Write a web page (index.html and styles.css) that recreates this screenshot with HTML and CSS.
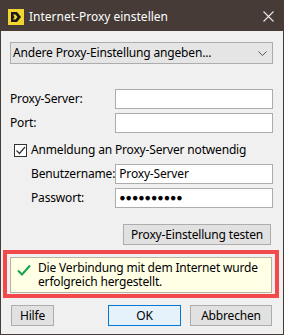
FILE: index.html
```html
<!DOCTYPE html>
<html lang="de">
<head>
  <meta charset="UTF-8" />
  <title>Internet-Proxy einstellen</title>
  <link rel="stylesheet" href="styles.css">
</head>
<body>
  <div class="window">
    <div class="titlebar">
      <svg class="app-icon" width="16" height="16" viewBox="0 0 16 16">
        <rect width="16" height="16" fill="#f2d530"/>
        <path d="M3 3h6l4 5-4 5H3l2-2.5h2.5L9.5 8 7.5 5.5H5L6.5 8 5 10.5 3 13V3z" fill="#1a1a1a"/>
      </svg>
      <span class="title">Internet-Proxy einstellen</span>
      <svg class="close" width="11" height="11" viewBox="0 0 11 11">
        <path d="M0.5 0.5l10 10M10.5 0.5l-10 10" stroke="#e8e8e8" stroke-width="1.1"/>
      </svg>
    </div>
    <div class="content">
      <div class="select">
        <span>Andere Proxy-Einstellung angeben...</span>
        <svg width="9" height="5" viewBox="0 0 9 5"><path d="M0.5 0.5l4 4 4-4" fill="none" stroke="#555" stroke-width="1"/></svg>
      </div>

      <div class="grid server">
        <label>Proxy-Server:</label>
        <div class="input"></div>
        <label>Port:</label>
        <div class="input"></div>
      </div>

      <div class="check-row">
        <span class="checkbox">
          <svg width="11" height="11" viewBox="0 0 11 11"><path d="M1.5 5.5l3 3 5.5-6.5" fill="none" stroke="#333" stroke-width="1.2"/></svg>
        </span>
        <span>Anmeldung an Proxy-Server notwendig</span>
      </div>

      <div class="grid login">
        <label>Benutzername:</label>
        <div class="input">Proxy-Server</div>
        <label>Passwort:</label>
        <div class="input dots">●●●●●●●●●●</div>
      </div>

      <div class="test-row">
        <button class="btn test">Proxy-Einstellung testen</button>
      </div>

      <div class="highlight">
        <div class="message">
          <svg class="ok-icon" width="14" height="12" viewBox="0 0 14 12"><path d="M1 6.5l4 4L13 1.5" fill="none" stroke="#16a34a" stroke-width="2"/></svg>
          <p>Die Verbindung mit dem Internet wurde erfolgreich hergestellt.</p>
        </div>
      </div>

      <div class="buttons">
        <button class="btn help">Hilfe</button>
        <button class="btn ok">OK</button>
        <button class="btn cancel">Abbrechen</button>
      </div>
    </div>
  </div>
</body>
</html>
```

FILE: styles.css
```css
body {
  margin: 0;
  padding: 0;
  font-family: 'Segoe UI', 'Noto Sans', sans-serif;
  font-size: 12px;
  line-height: 16px;
  letter-spacing: -0.17px;
  color: #000;
}
.window {
  width: 284px;
  height: 335px;
  background: #f0f0f0;
  display: flex;
  flex-direction: column;
}
.titlebar {
  height: 31px;
  background: #463b36;
  display: flex;
  align-items: center;
  padding: 3px 10px 0 8px;
  box-sizing: border-box;
  color: #fff;
}
.app-icon {
  flex: none;
}
.title {
  margin-left: 5px;
  flex: 1;
  font-size: 12px;
  letter-spacing: 0;
}
.close {
  margin-top: -1px;
}
.content {
  flex: 1;
  border: 1px solid #463b36;
  border-top: none;
  padding: 11px 10px 0 9px;
}
.select {
  height: 22px;
  box-sizing: border-box;
  border: 1px solid #adadad;
  background: #e5e5e5;
  display: flex;
  align-items: center;
  justify-content: space-between;
  padding: 0 5px 0 2px;
}
.grid {
  display: grid;
  grid-template-columns: 1fr 158px;
  row-gap: 4px;
  align-items: center;
}
.server {
  margin-top: 25px;
}
.login {
  margin-top: 6px;
  padding-left: 21px;
}
.input {
  height: 20px;
  box-sizing: border-box;
  border: 1px solid #adadad;
  background: #fff;
  padding: 0 3px;
  line-height: 17px;
}
.dots {
  font-size: 10.5px;
  letter-spacing: 0;
}
.check-row {
  margin-top: 9px;
  display: flex;
  align-items: center;
  padding-left: 4px;
}
.checkbox {
  width: 13px;
  height: 13px;
  box-sizing: border-box;
  border: 1px solid #333;
  background: #fff;
  display: flex;
  align-items: center;
  justify-content: center;
  margin-right: 4px;
}
.test-row {
  display: flex;
  justify-content: flex-end;
  margin-top: 16px;
  padding-right: 2px;
}
.btn {
  font-family: inherit;
  font-size: 12px;
  letter-spacing: -0.17px;
  height: 21px;
  box-sizing: border-box;
  border: 1px solid #adadad;
  background: #e1e1e1;
  padding: 0;
  color: #000;
}
.test {
  width: 148px;
}
.highlight {
  margin: 5px -6px 0 -7px;
  border: 4px solid #f24a4a;
  padding: 3px 3px 1px;
}
.message {
  border: 1px solid #b4b4a0;
  background: #ffffe6;
  display: flex;
  align-items: flex-start;
  padding: 3px 4px 3px 6px;
  height: 36px;
  box-sizing: border-box;
}
.ok-icon {
  flex: none;
  margin-top: 3px;
  margin-right: 7px;
}
.message p {
  margin: 0;
  line-height: 14px;
}
.buttons {
  display: flex;
  margin-top: 7px;
  padding-left: 1px;
}
.help {
  width: 43px;
}
.ok {
  width: 73px;
  margin-left: 54px;
  background: #e5f1fb;
  border-color: #0078d7;
}
.cancel {
  width: 82px;
  margin-left: 9px;
}
```
